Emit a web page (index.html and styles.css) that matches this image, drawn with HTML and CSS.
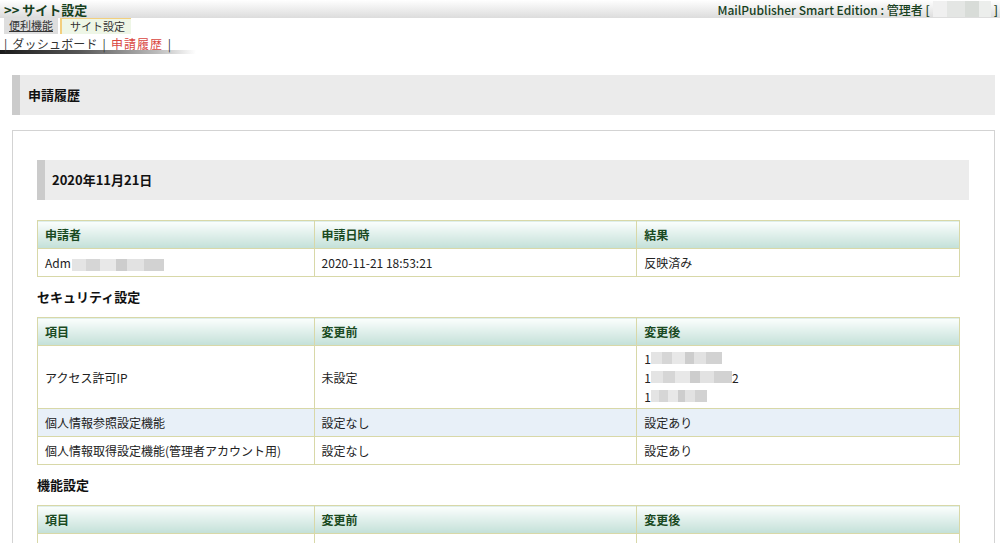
FILE: index.html
```html
<!DOCTYPE html>
<html lang="ja">
<head>
  <meta charset="UTF-8" />
  <title>申請履歴</title>
  <link rel="stylesheet" href="styles.css">
</head>
<body>
  <div class="topbar">
    <div class="site-title">&gt;&gt; サイト設定</div>
    <div class="account">MailPublisher Smart Edition : 管理者 [ <span class="mask mask-user"></span> ]</div>
  </div>

  <div class="tabs">
    <a class="tab">便利機能</a>
    <span class="tab active">サイト設定</span>
  </div>

  <div class="subnav">
    | <a>ダッシュボード</a> | <span class="current">申請履歴</span> |
  </div>
  <div class="subnav-line"></div>

  <h1 class="page-heading">申請履歴</h1>

  <div class="container">
    <h2 class="date-heading">2020年11月21日</h2>

    <table class="data">
      <tr><th class="c1">申請者</th><th>申請日時</th><th>結果</th></tr>
      <tr><td>Adm<span class="mask mask-name"></span></td><td>2020-11-21 18:53:21</td><td>反映済み</td></tr>
    </table>

    <h3 class="section">セキュリティ設定</h3>
    <table class="data">
      <tr><th class="c1">項目</th><th>変更前</th><th>変更後</th></tr>
      <tr class="tall">
        <td>アクセス許可IP</td>
        <td>未設定</td>
        <td>
          <div class="ip">1<span class="mask mask-ip1"></span></div>
          <div class="ip">1<span class="mask mask-ip2"></span>2</div>
          <div class="ip">1<span class="mask mask-ip3"></span></div>
        </td>
      </tr>
      <tr class="alt"><td>個人情報参照設定機能</td><td>設定なし</td><td>設定あり</td></tr>
      <tr><td>個人情報取得設定機能(管理者アカウント用)</td><td>設定なし</td><td>設定あり</td></tr>
    </table>

    <h3 class="section">機能設定</h3>
    <table class="data">
      <tr><th class="c1">項目</th><th>変更前</th><th>変更後</th></tr>
      <tr><td>&nbsp;</td><td>&nbsp;</td><td>&nbsp;</td></tr>
    </table>
  </div>
</body>
</html>
```

FILE: styles.css
```css
* {
  box-sizing: border-box;
  margin: 0;
  padding: 0;
}

body {
  font-family: "Noto Sans CJK JP", "Liberation Sans", sans-serif;
  font-size: 12px;
  color: #222;
  background: #fff;
}

.topbar {
  display: flex;
  justify-content: space-between;
  align-items: center;
  height: 18px;
  padding: 0 4px 0 4px;
  background: linear-gradient(#ffffff, #dcdcdc);
  color: #17401d;
}

.site-title {
  font-size: 13px;
  font-weight: bold;
}

.account {
  font-size: 12px;
  font-weight: 500;
  display: flex;
  align-items: center;
  gap: 3px;
  margin-right: -2px;
}

.mask {
  display: inline-block;
  vertical-align: middle;
  height: 12px;
  background: linear-gradient(90deg, #e4e4e4 0 15%, #d6d6d6 15% 30%, #e8e8e8 30% 48%, #cdcdcd 48% 60%, #e2e2e2 60% 78%, #d2d2d2 78% 100%);
}

.mask-user {
  width: 58px;
  height: 16px;
  background: linear-gradient(90deg, #f0f0f0 0 25%, #e4e6e4 25% 55%, #d8dcd8 55% 80%, #eceeec 80%);
}

.mask-name { width: 92px; margin-left: 1px; }
.mask-ip1 { width: 71px; }
.mask-ip2 { width: 81px; }
.mask-ip3 { width: 56px; }

.tabs {
  display: flex;
  gap: 2px;
  height: 16px;
  padding-left: 4px;
}

.tab {
  display: inline-block;
  padding: 0 5px;
  line-height: 15px;
  font-size: 11px;
  color: #333;
}

a.tab {
  background: #dedede;
  text-decoration: underline;
}

.tab.active {
  background: #eef6e6;
  border-top: 1px solid #f3cf7e;
  border-left: 2px solid #f3cf7e;
  padding: 0 6px 0 8px;
}

.subnav {
  font-size: 12px;
  color: #333;
  margin-top: 3px;
  padding-left: 4px;
  line-height: 13px;
  letter-spacing: 0.2px;
  word-spacing: 2px;
}

.subnav .current {
  color: #d9463f;
  letter-spacing: 1px;
}

.subnav-line {
  width: 196px;
  height: 4px;
  background: linear-gradient(90deg, #1a1a1a, #555 40%, #bbb 80%, #fff);
}

.page-heading {
  margin: 21px 5px 0 12px;
  height: 40px;
  line-height: 40px;
  background: #ebebeb;
  border-left: 8px solid #cbcbcb;
  padding-left: 8px;
  font-size: 13px;
  font-weight: bold;
  color: #111;
}

.container {
  margin: 15px 5px 0 12px;
  border: 1px solid #d3d3d3;
  border-bottom: none;
  padding: 29px 25px 0 24px;
  height: 420px;
}

.date-heading {
  height: 40px;
  line-height: 40px;
  background: #ececec;
  border-left: 8px solid #cbcbcb;
  padding-left: 7px;
  font-size: 13px;
  font-weight: bold;
  color: #111;
  margin-bottom: 20px;
}

.data {
  width: 923px;
  border-collapse: collapse;
  table-layout: fixed;
}

.data th,
.data td {
  border: 1px solid #d8d8a8;
  padding: 0 7px;
  text-align: left;
  height: 28px;
}

.data th {
  background: linear-gradient(#fbfefd, #c3e0d8);
  color: #1a4a22;
  font-weight: bold;
}

.data th.c1 {
  width: 30%;
}

.data .tall td {
  height: 63px;
}

.data .alt td {
  background: #e8f0f8;
}

.ip {
  line-height: 19px;
  display: flex;
  align-items: center;
}

.section {
  font-size: 13px;
  font-weight: bold;
  color: #111;
  margin: 12px 0 12px;
  line-height: 16px;
}
```
